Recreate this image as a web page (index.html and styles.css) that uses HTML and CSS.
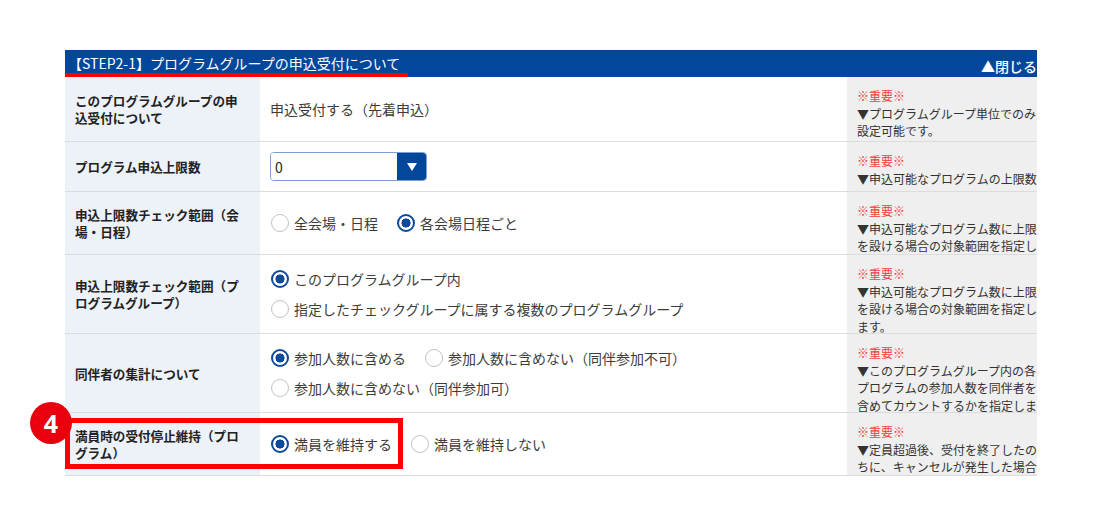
FILE: index.html
```html
<!DOCTYPE html>
<html lang="ja">
<head>
  <meta charset="UTF-8" />
  <meta name="viewport" content="width=device-width, initial-scale=1.0"/>
  <title>STEP2-1 プログラムグループの申込受付</title>
  <link rel="stylesheet" href="styles.css">
</head>
<body>

  <div class="page">
    <section class="step-panel">
      <div class="panel-head">
        <h2 class="panel-title">【STEP2-1】プログラムグループの申込受付について</h2>
        <a class="panel-close" href="#">▲閉じる</a>
      </div>

      <div class="form-table">
        <div class="form-row">
          <div class="form-label">このプログラムグループの申込受付について</div>
          <div class="form-value">申込受付する（先着申込）</div>
          <div class="form-note">
            <p><span class="note-mark">※重要※</span><br>▼プログラムグループ単位でのみ設定可能です。</p>
          </div>
        </div>

        <div class="form-row">
          <div class="form-label">プログラム申込上限数</div>
          <div class="form-value">
            <div class="select-wrap">
              <select class="select-input">
                <option>0</option>
                <option>1</option>
                <option>2</option>
                <option>3</option>
              </select>
              <span class="select-arrow">
                <svg width="10" height="8" viewBox="0 0 10 8"><polygon points="0,0 10,0 5,8" fill="#fff"/></svg>
              </span>
            </div>
          </div>
          <div class="form-note">
            <p><span class="note-mark">※重要※</span><br>▼申込可能なプログラムの上限数</p>
          </div>
        </div>

        <div class="form-row">
          <div class="form-label">申込上限数チェック範囲（会場・日程）</div>
          <div class="form-value">
            <div class="radio-group">
              <label class="radio"><input type="radio" name="range"> 全会場・日程</label>
              <label class="radio"><input type="radio" name="range" checked> 各会場日程ごと</label>
            </div>
          </div>
          <div class="form-note">
            <p><span class="note-mark">※重要※</span><br>▼申込可能なプログラム数に上限を設ける場合の対象範囲を指定します。</p>
          </div>
        </div>

        <div class="form-row">
          <div class="form-label">申込上限数チェック範囲（プログラムグループ）</div>
          <div class="form-value">
            <div class="radio-group">
              <label class="radio"><input type="radio" name="group" checked> このプログラムグループ内</label>
              <label class="radio"><input type="radio" name="group"> 指定したチェックグループに属する複数のプログラムグループ</label>
            </div>
          </div>
          <div class="form-note">
            <p><span class="note-mark">※重要※</span><br>▼申込可能なプログラム数に上限を設ける場合の対象範囲を指定します。</p>
          </div>
        </div>

        <div class="form-row">
          <div class="form-label">同伴者の集計について</div>
          <div class="form-value">
            <div class="radio-group">
              <label class="radio"><input type="radio" name="companion" checked> 参加人数に含める</label>
              <label class="radio"><input type="radio" name="companion"> 参加人数に含めない（同伴参加不可）</label>
              <label class="radio"><input type="radio" name="companion"> 参加人数に含めない（同伴参加可）</label>
            </div>
          </div>
          <div class="form-note">
            <p><span class="note-mark">※重要※</span><br>▼このプログラムグループ内の各プログラムの参加人数を同伴者を含めてカウントするかを指定します。</p>
          </div>
        </div>

        <div class="form-row">
          <div class="form-label">満員時の受付停止維持（プログラム）</div>
          <div class="form-value">
            <div class="radio-group">
              <label class="radio"><input type="radio" name="full" checked> 満員を維持する</label>
              <label class="radio"><input type="radio" name="full"> 満員を維持しない</label>
            </div>
          </div>
          <div class="form-note">
            <p><span class="note-mark">※重要※</span><br>▼定員超過後、受付を終了したのちに、キャンセルが発生した場合の扱いを指定します。</p>
          </div>
          <div class="highlight"></div>
          <div class="step-badge">4</div>
        </div>
      </div>
    </section>
  </div>

</body>
</html>
```

FILE: styles.css
```css
* {
  box-sizing: border-box;
  margin: 0;
  padding: 0;
}

body {
  font-family: "Noto Sans CJK JP", "Noto Sans", sans-serif;
  background-color: #fff;
  color: #333;
}

.page {
  padding: 50px 0 0 65px;
}

.step-panel {
  width: 972px;
}

/* header bar */
.panel-head {
  display: flex;
  justify-content: space-between;
  align-items: flex-end;
  height: 27px;
  background-color: #03479b;
  color: #fff;
}

.panel-title {
  font-size: 14px;
  font-weight: normal;
  line-height: 20px;
  padding: 0 8px 0 3px;
  border-bottom: 4px solid #f00;
}

.panel-close {
  font-size: 14px;
  font-weight: 500;
  line-height: 22px;
  color: #fff;
  text-decoration: none;
}

/* rows */
.form-row {
  position: relative;
  display: grid;
  grid-template-columns: 195px 587px 190px;
  border-bottom: 1px solid #dcdcdc;
}

.form-row:first-child .form-label {
  padding-top: 15px;
  padding-bottom: 15px;
}

.form-label {
  display: flex;
  align-items: center;
  background-color: #edf1f8;
  padding: 14px 17px 14px 10px;
  font-size: 12.6px;
  font-weight: bold;
  line-height: 17px;
  color: #222;
}

.form-value {
  display: flex;
  align-items: center;
  padding: 10px;
  font-size: 14px;
  line-height: 20px;
  color: #3c3c3c;
}

.form-note {
  contain: size;
  overflow: hidden;
  background-color: #efefef;
  padding: 10px 0 0 10px;
  font-size: 12px;
  line-height: 17.7px;
  color: #333;
}

.form-note p {
  width: 182px;
}

.note-mark {
  color: #f03c3c;
}

/* select */
.select-wrap {
  display: flex;
  width: 157px;
  height: 29px;
  border: 1px solid #7c9ed3;
  border-radius: 4px;
  overflow: hidden;
}

.select-input {
  flex: 1;
  appearance: none;
  -webkit-appearance: none;
  border: none;
  outline: none;
  background: #fff;
  padding: 0 0 0 4px;
  font-family: inherit;
  font-size: 14px;
  color: #222;
}

.select-arrow {
  display: flex;
  align-items: center;
  justify-content: center;
  width: 29px;
  background-color: #03479b;
}

/* radios */
.radio-group {
  display: flex;
  flex-wrap: wrap;
  row-gap: 8px;
  column-gap: 18px;
  padding: 3px 0;
}

.radio {
  display: inline-flex;
  align-items: center;
  height: 22px;
  gap: 5px;
  cursor: pointer;
}

.radio input {
  appearance: none;
  -webkit-appearance: none;
  width: 18px;
  height: 18px;
  margin: 0 0 0 1px;
  border: 1.5px solid #c2c2c2;
  border-radius: 50%;
  background: #fff;
}

.radio input:checked {
  border: 2px solid #0d4a9a;
  background: radial-gradient(circle, #0d4a9a 0 4.3px, #fff 4.8px);
}

/* annotation */
.highlight {
  position: absolute;
  left: 0;
  top: 5px;
  width: 338px;
  height: 51px;
  border: 5px solid #f00;
  pointer-events: none;
}

.step-badge {
  position: absolute;
  left: -35px;
  top: -11px;
  width: 42px;
  height: 42px;
  border-radius: 50%;
  background-color: #e8000e;
  color: #fff;
  font-family: "Noto Sans", sans-serif;
  font-size: 25px;
  font-weight: bold;
  line-height: 1;
  display: flex;
  align-items: center;
  justify-content: center;
}
```
